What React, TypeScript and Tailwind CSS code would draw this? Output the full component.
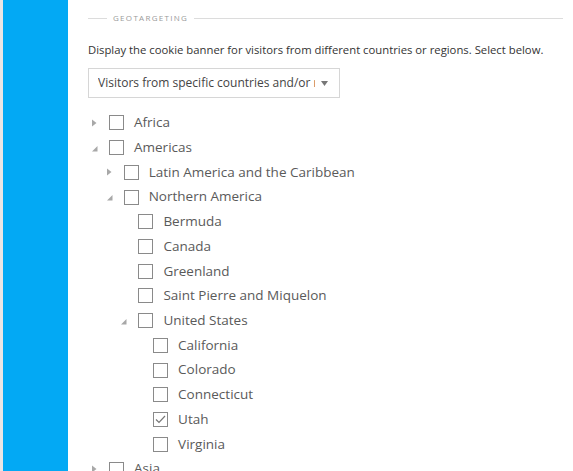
import React from "react";

type Node = { label: string; level: number; arrow?: "closed" | "open"; checked?: boolean };

const rows: Node[] = [
  { label: "Africa", level: 0, arrow: "closed" },
  { label: "Americas", level: 0, arrow: "open" },
  { label: "Latin America and the Caribbean", level: 1, arrow: "closed" },
  { label: "Northern America", level: 1, arrow: "open" },
  { label: "Bermuda", level: 2 },
  { label: "Canada", level: 2 },
  { label: "Greenland", level: 2 },
  { label: "Saint Pierre and Miquelon", level: 2 },
  { label: "United States", level: 2, arrow: "open" },
  { label: "California", level: 3 },
  { label: "Colorado", level: 3 },
  { label: "Connecticut", level: 3 },
  { label: "Utah", level: 3, checked: true },
  { label: "Virginia", level: 3 },
  { label: "Asia", level: 0, arrow: "closed" },
];

function Arrow({ kind }: { kind?: "closed" | "open" }) {
  if (kind === "closed")
    return (
      <svg width="5" height="8" viewBox="0 0 5 8" className="ml-[4px]">
        <path d="M0 0.5 L4.5 4 L0 7.5 Z" fill="#a8a8a8" />
      </svg>
    );
  if (kind === "open")
    return (
      <svg width="6" height="6" viewBox="0 0 6 6" className="ml-[4px] mt-[2px]">
        <path d="M5.5 0 L5.5 5.5 L0 5.5 Z" fill="#a8a8a8" />
      </svg>
    );
  return null;
}

function Row({ n }: { n: Node }) {
  return (
    <div className="flex h-[24.72px] items-center" style={{ paddingLeft: n.level * 14.7 }}>
      <div className="flex w-[21px] items-center">
        <Arrow kind={n.arrow} />
      </div>
      <div className="flex h-[15px] w-[15px] items-center justify-center border border-[#8a8a8a] bg-white">
        {n.checked && (
          <svg width="11" height="9" viewBox="0 0 11 9">
            <path d="M1 4.5 L4 7.5 L10 1" fill="none" stroke="#777" strokeWidth="1.2" />
          </svg>
        )}
      </div>
      <span className="ml-[10px] whitespace-nowrap text-[13.5px] leading-none text-[#5a5a5a]">{n.label}</span>
    </div>
  );
}

export default function App() {
  return (
    <div
      className="flex h-[471px] w-[573px] overflow-hidden bg-white"
      style={{ fontFamily: '"Open Sans", "Noto Sans", sans-serif' }}
    >
      <div className="w-[3px] shrink-0 bg-[#ebe5e5]" />
      <div className="w-[65px] shrink-0 bg-[#03a9f4]" />
      <div className="flex-1 pl-[20px] pr-[10px] pt-[11px]">
        <div className="flex h-[14px] items-center">
          <div className="h-px w-[19px] bg-[#dcdcdc]" />
          <span className="mx-[6px] text-[8px] tracking-[1.3px] text-[#9a9a9a]">GEOTARGETING</span>
          <div className="h-px flex-1 bg-[#dcdcdc]" />
        </div>
        <p className="mt-[16px] whitespace-nowrap text-[11.3px] leading-[18px] text-[#333]">
          Display the cookie banner for visitors from different countries or regions. Select below.
        </p>
        <div className="mt-[9px] flex h-[30px] w-[252px] items-center border border-[#d6d6d6] pl-[9px] pr-[11px]">
          <span className="min-w-0 flex-1 overflow-hidden whitespace-nowrap text-[12px] text-[#444]">
            Visitors from specific countries and/or regions
          </span>
          <svg width="7" height="5" viewBox="0 0 7 5" className="ml-[6px] shrink-0">
            <path d="M0 0 L7 0 L3.5 5 Z" fill="#777" />
          </svg>
        </div>
        <div className="mt-[12.6px]">
          {rows.map((n, i) => (
            <Row key={i} n={n} />
          ))}
        </div>
      </div>
    </div>
  );
}
